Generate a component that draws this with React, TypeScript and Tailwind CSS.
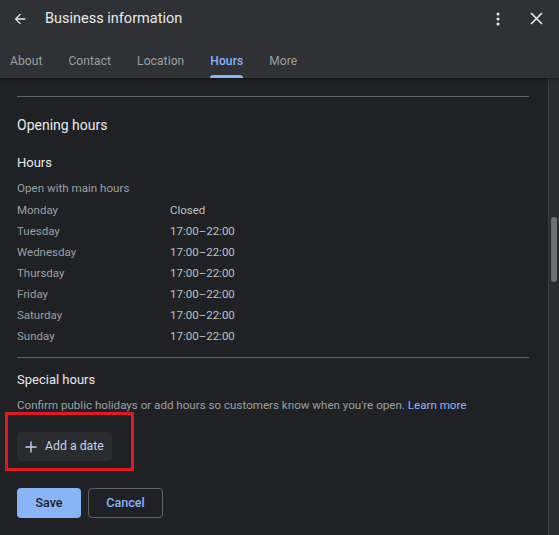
import React from 'react';

const days: { day: string; hours: string }[] = [
  { day: 'Monday', hours: 'Closed' },
  { day: 'Tuesday', hours: '17:00–22:00' },
  { day: 'Wednesday', hours: '17:00–22:00' },
  { day: 'Thursday', hours: '17:00–22:00' },
  { day: 'Friday', hours: '17:00–22:00' },
  { day: 'Saturday', hours: '17:00–22:00' },
  { day: 'Sunday', hours: '17:00–22:00' },
];

const tabs = ['About', 'Contact', 'Location', 'Hours', 'More'];

const Header = () => (
  <div className="relative z-10 h-[78px] shrink-0 bg-[#303134] shadow-[0_1px_3px_rgba(0,0,0,0.5)]">
    <div className="flex h-[37px] items-center">
      <button className="flex w-[38px] items-center justify-center pl-[1px] text-[#e8eaed]">
        <svg width="16" height="16" viewBox="0 0 24 24" fill="currentColor">
          <path d="M20 11H7.83l5.59-5.59L12 4l-8 8 8 8 1.41-1.41L7.83 13H20v-2z" />
        </svg>
      </button>
      <h1 className="ml-[7px] text-[14.5px] leading-5 text-[#e8eaed]">Business information</h1>
      <div className="ml-auto flex items-center">
        <button className="flex w-[20px] items-center justify-center text-[#e8eaed]">
          <svg width="4" height="14" viewBox="0 0 4 14" fill="currentColor">
            <circle cx="2" cy="2" r="1.5" />
            <circle cx="2" cy="7" r="1.5" />
            <circle cx="2" cy="12" r="1.5" />
          </svg>
        </button>
        <button className="ml-[18px] mr-[13px] flex w-[20px] items-center justify-center text-[#e8eaed]">
          <svg width="13" height="13" viewBox="0 0 13 13" stroke="currentColor" strokeWidth="1.6" fill="none">
            <path d="M1 1l11 11M12 1L1 12" />
          </svg>
        </button>
      </div>
    </div>
    <div className="flex h-[41px] items-stretch gap-[26px] pl-[10px] pt-[8px]">
      {tabs.map((t) => {
        const active = t === 'Hours';
        return (
          <div key={t} className="relative flex items-center pb-[2px]">
            <span className={`text-[12px] leading-4 tracking-[0.1px] ${active ? 'font-medium text-[#8ab4f8]' : 'text-[#9aa0a6]'}`}>{t}</span>
            {active && <span className="absolute bottom-0 left-0 right-0 h-[3px] rounded-t-[3px] bg-[#8ab4f8]" />}
          </div>
        );
      })}
    </div>
  </div>
);

const App = () => {
  return (
    <div
      className="flex h-[535px] w-[559px] flex-col overflow-hidden bg-[#202124]"
      style={{ fontFamily: 'Roboto, "Noto Sans", sans-serif' }}
    >
      <Header />
      <div className="flex min-h-0 flex-1">
        <div className="min-w-0 flex-1 overflow-hidden pl-[17px] pr-[19px]">
          {/* line scrolled away under the header, only its tails show */}
          <div className="h-[5px] overflow-hidden">
            <p className="mt-[-9px] whitespace-nowrap text-[12px] leading-[4px] text-[#9aa0a6]">
              Add hours or more details, such as your pick-up times
            </p>
          </div>
          <div className="mt-[13px] h-px bg-[#5f6368]" />

          <h2 className="mt-[18px] text-[14px] leading-5 text-[#e8eaed]">Opening hours</h2>

          <h3 className="mt-[18px] text-[13px] leading-5 text-[#e8eaed]">Hours</h3>
          <p className="mt-[7px] text-[11.6px] leading-4 text-[#9aa0a6]">Open with main hours</p>

          <div className="mt-[4px]">
            {days.map((d) => (
              <div key={d.day} className="flex h-[21px] items-center text-[11.5px] text-[#9aa0a6]">
                <span className="w-[153px]">{d.day}</span>
                <span className="text-[#bdc1c6]">{d.hours}</span>
              </div>
            ))}
          </div>

          <div className="mt-[10px] h-px bg-[#5f6368]" />

          <h3 className="mt-[12px] text-[13px] leading-5 text-[#e8eaed]">Special hours</h3>
          <p className="mt-[7px] text-[11.6px] leading-4 text-[#9aa0a6]">
            Confirm public holidays or add hours so customers know when you're open.{' '}
            <span className="text-[#8ab4f8]">Learn more</span>
          </p>

          <div className="relative mt-[19px] w-fit">
            <button className="flex h-[29px] items-center gap-[8px] rounded-[4px] bg-[#2a2b2f] pl-[8px] pr-[8px] text-[12.3px] text-[#c6d3ec]">
              <svg width="12" height="12" viewBox="0 0 12 12" stroke="currentColor" strokeWidth="1.4" fill="none">
                <path d="M6 0.5v11M0.5 6h11" />
              </svg>
              Add a date
            </button>
            <div className="pointer-events-none absolute left-[-12px] top-[-20px] h-[59px] w-[129px] border-[3px] border-[#e0191e]" />
          </div>

          <div className="mt-[27px] flex gap-[7px]">
            <button className="h-[30px] w-[64px] rounded-[4px] bg-[#8ab4f8] text-[12.5px] font-medium text-[#202124]">Save</button>
            <button className="h-[30px] w-[75px] rounded-[4px] border border-[#5f6368] text-[12.5px] font-medium text-[#8ab4f8]">Cancel</button>
          </div>
        </div>
        <div className="w-[11px] shrink-0 border-l border-[#3c3d40] bg-[#2b2c2f] pt-[139px]">
          <div className="ml-[2px] h-[65px] w-[6px] rounded-full bg-[#6e6f72]" />
        </div>
      </div>
    </div>
  );
};

export default App;
